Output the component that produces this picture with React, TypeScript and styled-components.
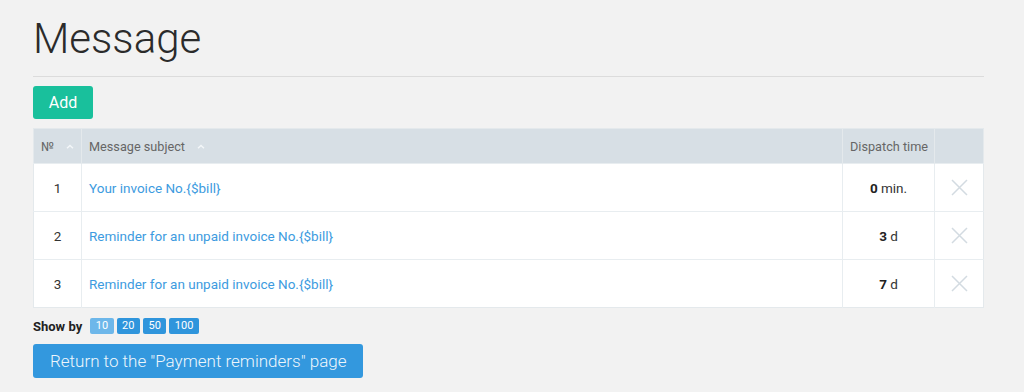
import React from "react";
import styled, { createGlobalStyle } from "styled-components";

const GlobalStyle = createGlobalStyle`
  html, body {
    margin: 0;
    padding: 0;
    background: #f2f2f2;
    font-family: Roboto, "Liberation Sans", Arial, sans-serif;
    color: #333;
  }
`;

const Page = styled.div`
  padding: 0 40px 0 33px;
`;

const Title = styled.h1`
  margin: 14px 0 0;
  font-size: 42px;
  line-height: 50px;
  font-weight: 300;
  color: #2b2b2b;
  padding-bottom: 12px;
  border-bottom: 1px solid #dcdcdc;
`;

const AddButton = styled.button`
  margin-top: 9px;
  display: block;
  width: 60px;
  height: 33px;
  border: none;
  border-radius: 3px;
  background: #19c09c;
  color: #fff;
  font-family: inherit;
  font-size: 16px;
  font-weight: 400;
  padding: 0;
`;

const Table = styled.table`
  margin-top: 9px;
  width: 100%;
  table-layout: fixed;
  border-collapse: collapse;
  background: #fff;
  border: 1px solid #e4e9ec;
`;

const HeadCell = styled.th<{ $width?: number; $center?: boolean }>`
  height: 35px;
  padding: 0 7px;
  background: #d7dfe5;
  color: #666;
  font-size: 12.7px;
  font-weight: 400;
  text-align: ${(p) => (p.$center ? "center" : "left")};
  border-left: 1px solid #e4e9ec;
  width: ${(p) => (p.$width ? `${p.$width}px` : "auto")};
  white-space: nowrap;
  box-sizing: border-box;
  &:first-child {
    border-left: none;
  }
`;

const Caret = styled.svg`
  margin-left: 12px;
  vertical-align: middle;
  position: relative;
  top: -1px;
`;

const Cell = styled.td<{ $align?: "left" | "center" }>`
  height: 48px;
  padding: 0 7px;
  font-size: 13.5px;
  color: #333;
  text-align: ${(p) => p.$align || "left"};
  border-top: 1px solid #e8edf0;
  border-left: 1px solid #e8edf0;
  box-sizing: border-box;
  &:first-child {
    border-left: none;
  }
`;

const SubjectLink = styled.a`
  color: #3d9be0;
  text-decoration: none;
`;

const Amount = styled.b`
  font-weight: 700;
  color: #222;
`;

const RemoveIcon = styled.svg`
  display: block;
  margin: 0 auto;
`;

const Pager = styled.div`
  margin-top: 10px;
  display: flex;
  align-items: center;
  height: 16px;
`;

const PagerLabel = styled.span`
  font-size: 13px;
  font-weight: 700;
  color: #222;
  margin-right: 8px;
`;

const PageSize = styled.button<{ $active?: boolean }>`
  height: 16px;
  padding: 0 5.5px;
  margin-right: 3px;
  border: none;
  border-radius: 2px;
  background: ${(p) => (p.$active ? "#6db7ea" : "#2f95dc")};
  color: #fff;
  font-family: inherit;
  font-size: 11px;
  line-height: 16px;
`;

const ReturnButton = styled.button`
  margin-top: 10px;
  display: block;
  height: 34px;
  padding: 0 17px;
  border: none;
  border-radius: 3px;
  background: #3398de;
  color: #eef6fc;
  font-family: inherit;
  font-size: 17px;
  font-weight: 300;
`;

const rows = [
  { n: 1, subject: "Your invoice No.{$bill}", value: "0", unit: "min." },
  { n: 2, subject: "Reminder for an unpaid invoice No.{$bill}", value: "3", unit: "d" },
  { n: 3, subject: "Reminder for an unpaid invoice No.{$bill}", value: "7", unit: "d" },
];

const SortCaret = () => (
  <Caret width="8" height="5" viewBox="0 0 8 5">
    <path d="M1 4.2 L4 1.4 L7 4.2" fill="none" stroke="#f4f7f9" strokeWidth="1.4" />
  </Caret>
);

export default function App() {
  return (
    <Page>
      <GlobalStyle />
      <Title>Message</Title>
      <AddButton>Add</AddButton>
      <Table>
        <thead>
          <tr>
            <HeadCell $width={48}>
              №<SortCaret />
            </HeadCell>
            <HeadCell>
              Message subject<SortCaret />
            </HeadCell>
            <HeadCell $width={92} $center>
              Dispatch time
            </HeadCell>
            <HeadCell $width={49} />
          </tr>
        </thead>
        <tbody>
          {rows.map((r) => (
            <tr key={r.n}>
              <Cell $align="center">{r.n}</Cell>
              <Cell>
                <SubjectLink href="#">{r.subject}</SubjectLink>
              </Cell>
              <Cell $align="center">
                <Amount>{r.value}</Amount> {r.unit}
              </Cell>
              <Cell>
                <RemoveIcon width="17" height="17" viewBox="0 0 17 17">
                  <path d="M1 1 L16 16 M16 1 L1 16" stroke="#d3dbe1" strokeWidth="1.5" />
                </RemoveIcon>
              </Cell>
            </tr>
          ))}
        </tbody>
      </Table>
      <Pager>
        <PagerLabel>Show by</PagerLabel>
        <PageSize $active>10</PageSize>
        <PageSize>20</PageSize>
        <PageSize>50</PageSize>
        <PageSize>100</PageSize>
      </Pager>
      <ReturnButton>Return to the "Payment reminders" page</ReturnButton>
    </Page>
  );
}
